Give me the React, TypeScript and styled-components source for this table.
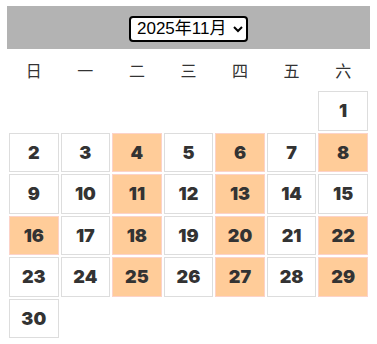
import styled, { createGlobalStyle } from "styled-components";
import { useState } from "react";

const GlobalStyle = createGlobalStyle`
  body {
    margin: 6px 7px;
    font-family: "Liberation Sans", "Noto Sans CJK SC", sans-serif;
    color: #333;
    background: #fff;
  }
`;

const weekdays = ["日", "一", "二", "三", "四", "五", "六"];
const marked = [4, 6, 8, 11, 13, 16, 18, 20, 22, 25, 27, 29];

const App = () => {
  const [month, setMonth] = useState("2025-11");
  const year = Number(month.split("-")[0]);
  const mon = Number(month.split("-")[1]);
  const firstDay = new Date(year, mon - 1, 1).getDay();
  const daysInMonth = new Date(year, mon, 0).getDate();

  const cells: (number | null)[] = [];
  for (let i = 0; i < firstDay; i++) cells.push(null);
  for (let d = 1; d <= daysInMonth; d++) cells.push(d);
  while (cells.length % 7 !== 0) cells.push(null);
  const weeks: (number | null)[][] = [];
  for (let i = 0; i < cells.length; i += 7) weeks.push(cells.slice(i, i + 7));

  return (
    <>
      <GlobalStyle />
      <Calendar>
        <Caption>
          <MonthSelect value={month} onChange={(e) => setMonth(e.target.value)}>
            {Array.from({ length: 12 }, (_, i) => (
              <option key={i} value={`2025-${i + 1}`}>
                2025年{i + 1}月
              </option>
            ))}
          </MonthSelect>
        </Caption>
        <thead>
          <tr>
            {weekdays.map((w) => (
              <Weekday key={w}>{w}</Weekday>
            ))}
          </tr>
        </thead>
        <tbody>
          {weeks.map((week, i) => (
            <tr key={i}>
              {week.map((d, j) =>
                d === null ? (
                  <Empty key={j} />
                ) : (
                  <Day key={j} $marked={mon === 11 && marked.includes(d)}>
                    {d}
                  </Day>
                )
              )}
            </tr>
          ))}
        </tbody>
      </Calendar>
    </>
  );
};
export default App;

// styles
const Calendar = styled.table`
  width: 363px;
  border-spacing: 2px;
  table-layout: fixed;
`;

const Caption = styled.caption`
  background: #b3b3b3;
  height: 43px;
  vertical-align: middle;
  line-height: 43px;
`;

const MonthSelect = styled.select`
  font-family: "Liberation Sans", "Noto Sans CJK SC", sans-serif;
  font-size: 17px;
  color: #000;
  background: #fff;
  border: 2px solid #000;
  border-radius: 4px;
  height: 26px;
  padding: 0 2px;
  vertical-align: middle;
`;

const Weekday = styled.th`
  height: 38px;
  font-family: "Noto Sans CJK SC", sans-serif;
  font-weight: normal;
  font-size: 16px;
  color: #333;
  padding: 0;
`;

const Day = styled.td<{ $marked: boolean }>`
  height: 37.5px;
  padding: 0;
  text-align: center;
  font-family: Inter, "Liberation Sans", sans-serif;
  font-weight: 900;
  font-size: 18px;
  color: #333;
  border: 1px solid ${(p) => (p.$marked ? "#fcd3c9" : "#ddd")};
  background: ${(p) => (p.$marked ? "#ffcc99" : "#fff")};
`;

const Empty = styled.td`
  height: 37.5px;
  padding: 0;
`;
